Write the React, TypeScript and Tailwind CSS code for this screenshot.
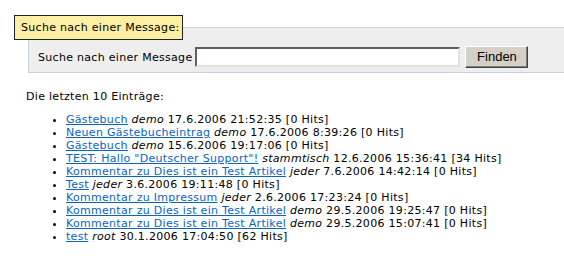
import React from "react";

type Entry = {
  title: string;
  user: string;
  date: string;
  hits: number;
};

const entries: Entry[] = [
  { title: "Gästebuch", user: "demo", date: "17.6.2006 21:52:35", hits: 0 },
  { title: "Neuen Gästebucheintrag", user: "demo", date: "17.6.2006 8:39:26", hits: 0 },
  { title: "Gästebuch", user: "demo", date: "15.6.2006 19:17:06", hits: 0 },
  { title: 'TEST: Hallo "Deutscher Support"!', user: "stammtisch", date: "12.6.2006 15:36:41", hits: 34 },
  { title: "Kommentar zu Dies ist ein Test Artikel", user: "jeder", date: "7.6.2006 14:42:14", hits: 0 },
  { title: "Test", user: "jeder", date: "3.6.2006 19:11:48", hits: 0 },
  { title: "Kommentar zu Impressum", user: "jeder", date: "2.6.2006 17:23:24", hits: 0 },
  { title: "Kommentar zu Dies ist ein Test Artikel", user: "demo", date: "29.5.2006 19:25:47", hits: 0 },
  { title: "Kommentar zu Dies ist ein Test Artikel", user: "demo", date: "29.5.2006 15:07:41", hits: 0 },
  { title: "test", user: "root", date: "30.1.2006 17:04:50", hits: 62 },
];

function SearchBox() {
  return (
    <div className="pt-[15px]">
      <div className="relative z-10 ml-[14px] inline-block h-[25px] border border-[#222] bg-[#fcefa3] pl-[6px] pr-[3px] leading-[23px]">
        Suche nach einer Message:
      </div>
      <div className="-mt-[13px] ml-[28px] -mr-[10px] flex items-center border border-r-0 border-[#c6d3dc] bg-[#eeeeee] pl-[9px] pt-[18px] pb-[4px]">
        <label className="mr-[3px]">Suche nach einer Message</label>
        <input
          type="text"
          className="h-[20px] w-[265px] border-2 border-t-[#5f5f5f] border-l-[#5f5f5f] border-r-[#e4e1da] border-b-[#e4e1da] bg-white outline-none"
        />
        <button
          type="button"
          className="ml-[5px] h-[22px] w-[63px] border border-t-white border-l-white border-r-[#404040] border-b-[#404040] bg-[#d4d0c8] text-[13px] leading-[18px] tracking-normal text-black shadow-[inset_-1px_-1px_0_#808080] [font-family:'Liberation_Sans',Arial,sans-serif]"
        >
          Finden
        </button>
      </div>
    </div>
  );
}

export default function App() {
  return (
    <div className="min-h-[279px] w-[564px] overflow-hidden bg-white text-[11px] leading-[13px] tracking-[0.3px] text-black [font-family:'DejaVu_Sans',Verdana,sans-serif]">
      <SearchBox />
      <p className="mt-[17px] ml-[26px]">Die letzten 10 Einträge:</p>
      <ul className="mt-[10px] ml-[66px] list-disc">
        {entries.map((e, i) => (
          <li key={i}>
            <a href="#" className="text-[#0a64c2] underline">
              {e.title}
            </a>{" "}
            <i>{e.user}</i> {e.date} [{e.hits} Hits]
          </li>
        ))}
      </ul>
    </div>
  );
}
